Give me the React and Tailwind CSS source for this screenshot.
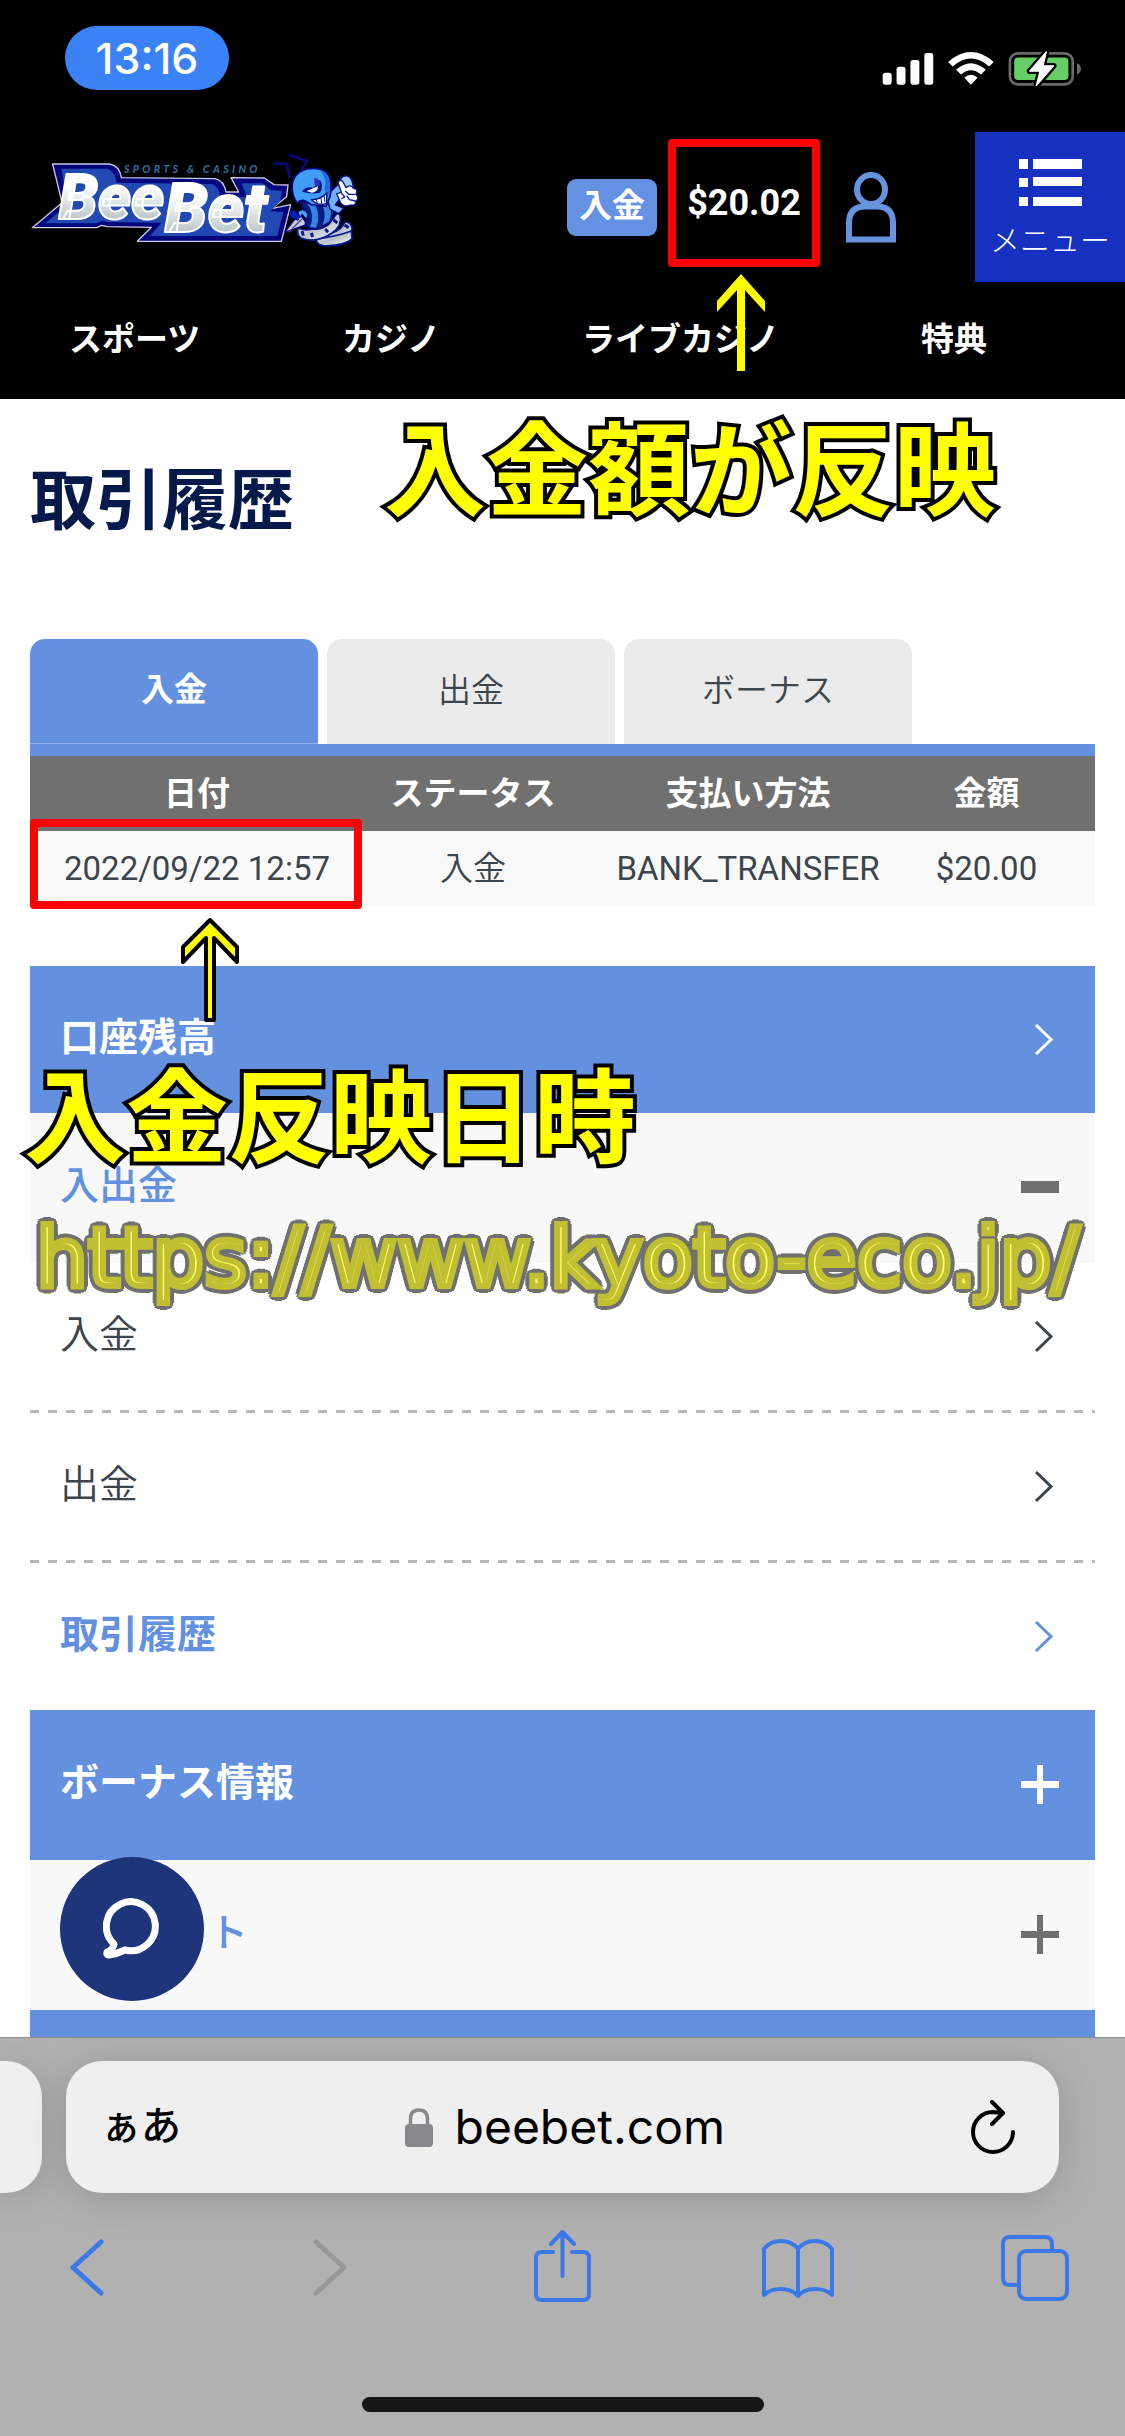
const jp = "font-['Roboto','Noto_Sans_CJK_JP',sans-serif]";

function StatusIcons() {
  return (
    <svg viewBox="60 60 610 115" className="mt-[50px] h-[38px] w-[203px]" aria-label="電波・Wi-Fi・バッテリー">
      <g fill="#fff">
        <rect x="66" y="129" width="27" height="36" rx="8" />
        <rect x="108" y="111" width="27" height="54" rx="8" />
        <rect x="150" y="90" width="27" height="75" rx="8" />
        <rect x="192" y="69" width="27" height="96" rx="8" />
        <path d="M264 96 Q333 36 402 96 L388 110 Q333 62 278 110 Z" />
        <path d="M288 120 Q333 80 378 120 L363 134 Q333 108 303 134 Z" />
        <path d="M313 144 Q333 126 353 144 L333 165 Z" />
      </g>
      <rect x="451" y="70" width="190" height="94" rx="24" fill="none" stroke="#6b6b6b" strokeWidth="8" />
      <rect x="464" y="83" width="164" height="68" rx="12" fill="#65cf66" />
      <path d="M654 100 Q666 104 666 117 Q666 130 654 134 Z" fill="#6b6b6b" />
      <path d="M561 66 L511 124 H542 L531 168 L583 108 H551 Z" fill="#fff" stroke="#000" strokeWidth="18" strokeLinejoin="round" />
      <path d="M561 66 L511 124 H542 L531 168 L583 108 H551 Z" fill="#fff" stroke="#fff" strokeWidth="4" strokeLinejoin="round" />
    </svg>
  );
}

function Logo() {
  return (
    <svg viewBox="33 60 996 342" className="h-[114px] w-[332px]" role="img" aria-label="BeeBet Sports & Casino">
      <defs>
        <linearGradient id="steel" x1="0" y1="0" x2="0" y2="1">
          <stop offset="0.35" stopColor="#fff" />
          <stop offset="0.85" stopColor="#b4c0c2" />
        </linearGradient>
        <linearGradient id="coil" x1="0" y1="0" x2="1" y2="1">
          <stop offset="0" stopColor="#fff" />
          <stop offset="0.5" stopColor="#b9c2c6" />
          <stop offset="1" stopColor="#fff" />
        </linearGradient>
      </defs>
      <path
        d="M98 102 L268 102 Q298 106 304 143 L585 146 Q612 152 618 186 L656 186 L633 143 L733 144 L762 164 L804 165 L800 200 L755 236 L812 224 L784 334 L352 334 L394 292 L262 290 L245 286 L230 293 L37 293 L126 218 Z"
        fill="#05057c" stroke="#c9c8e4" strokeWidth="4" strokeLinejoin="round"
      />
      <path
        d="M124 116 L262 116 Q284 122 290 158 L576 162 Q596 170 602 202 L682 202 L664 160 L728 160 L752 180 L786 182 L780 214 L752 244 L790 246 L772 318 L390 318 L424 278 L262 276 L245 272 L230 280 L76 280 L142 224 Z"
        fill="#2049b3"
      />
      <g fontFamily="Roboto, sans-serif" fontWeight="900" fontStyle="italic" stroke="#fff" strokeWidth="6" strokeLinejoin="round" fill="url(#steel)">
        <text x="116" y="266" fontSize="188">Bee</text>
        <text x="434" y="306" fontSize="206">Bet</text>
      </g>
      <text x="312" y="130" fontFamily="Lato, sans-serif" fontWeight="700" fontStyle="italic" fontSize="32" fill="#2a74a4" letterSpacing="10">SPORTS &amp; CASINO</text>
      <g transform="translate(750 45)" strokeLinejoin="round">
        <path d="M12 55 L50 56 L60 98 M56 29 L112 48 L92 78" fill="none" stroke="#090a78" strokeWidth="8" />
        <path d="M44 262 L88 205 L112 238 Z" fill="#c8c7de" stroke="#05057c" strokeWidth="4" />
        <path d="M56 262 L96 222" stroke="#4d4c8b" strokeWidth="4" />
        <path d="M58 202 Q70 188 90 210 L84 226 L62 218 Z" fill="#0b1cb2" stroke="#05057c" strokeWidth="3" />
        <g fill="url(#coil)" stroke="#0a1a93" strokeWidth="5">
          <path d="M160 270 Q214 262 224 232 Q246 230 246 254 Q230 286 176 292 Z" />
          <path d="M138 280 Q190 278 244 258 L246 282 Q220 304 160 302 Q140 300 138 280 Z" />
          <path d="M84 250 Q130 268 190 220 Q204 196 210 212 Q218 240 186 264 Q140 296 94 280 Q80 272 84 250 Z" />
        </g>
        <path d="M96 258 L100 272 M124 264 L128 276 M166 252 L174 262 M190 224 L202 234 M224 240 L236 248" stroke="#0a1a93" strokeWidth="9" />
        <path d="M92 172 L184 172 Q204 206 176 238 Q142 264 106 244 Q112 212 92 172 Z" fill="#071d7c" stroke="#05057c" strokeWidth="5" />
        <path d="M112 176 Q136 206 120 246 L138 248 Q154 214 134 176 Z M154 178 Q172 204 158 240 L176 230 Q190 204 176 178 Z" fill="#3384e4" />
        <path d="M84 202 Q98 184 114 208 L110 222 L96 208 L90 218 Z" fill="#4aa0f2" stroke="#05057c" strokeWidth="3" />
        <path d="M170 152 L210 112 L226 138 L196 180 L222 190 L206 206 L180 192 Z" fill="#74adf0" stroke="#05057c" strokeWidth="4" />
        <path d="M214 98 Q236 84 246 108 L250 126 L232 142 L206 122 Z" fill="#9bcbf8" stroke="#0a1a93" strokeWidth="4" />
        <path d="M204 112 Q212 100 220 112 L228 128 Q242 116 250 130 Q266 132 258 148 Q270 160 256 170 Q260 182 240 180 Q216 190 208 164 L200 146 L214 142 Z" fill="#fff" stroke="#0a1a93" strokeWidth="4" />
        <path d="M226 138 L236 148 L256 148 M230 152 L238 164 L256 168 M214 144 L224 156 L214 162" fill="none" stroke="#0a1a93" strokeWidth="4" />
        <path d="M67 136 Q62 84 112 72 Q160 64 176 92 Q188 118 180 154 L168 184 L122 178 Q96 156 82 174 Q70 160 67 136 Z" fill="#429df5" stroke="#070b80" strokeWidth="5" />
        <path d="M152 76 Q180 88 180 128 L173 160 L164 132 Q172 104 152 76 Z" fill="#2366d4" />
        <path d="M96 140 Q106 122 130 128 L150 104 Q162 124 150 143 Q124 149 96 140 Z" fill="#08158c" />
        <path d="M110 138 L144 124 Q144 142 126 143 Z" fill="#fff" />
        <path d="M134 98 Q150 100 150 122 L137 124 Q130 112 134 98 Z" fill="#3030ba" />
        <path d="M124 164 Q152 164 170 144 L170 174 Q150 186 124 164 Z" fill="#fff" stroke="#08158c" strokeWidth="4" />
        <path d="M138 162 L142 176 M152 156 L156 178 M162 150 L165 172" stroke="#08158c" strokeWidth="3" />
      </g>
    </svg>
  );
}

function PersonIcon() {
  return (
    <svg viewBox="0 0 50 71" className="h-[71px] w-[50px]" fill="none" stroke="#6793de" strokeWidth="6">
      <ellipse cx="25" cy="17.500" rx="14" ry="14.500" />
      <path d="M3 67.500 V51 Q3 34.500 19 34.500 H31 Q47 34.500 47 51 V67.500 Z" />
    </svg>
  );
}

function MenuIcon() {
  return (
    <svg viewBox="0 0 63 48" className="h-[48px] w-[63px]" fill="#fff">
      <path d="M0 0h9v10H0zM14 0h49v10H14zM0 19h9v9H0zM14 18h49v9H14zM0 38h9v9H0zM14 38h49v9H14z" />
    </svg>
  );
}

const rowIcons = {
  chevron: <path d="M15 5 L30 19.500 L15 34" fill="none" stroke="currentColor" strokeWidth="3" />,
  minus: <path d="M0 12h38v12H0z" fill="currentColor" />,
  plus: <path d="M0 15h16V-1h6v16h16v7H22v16h-6V22H0z" fill="currentColor" />,
};

function Row({ label, icon, className, iconColor = "", indent = "pl-[30px]" }) {
  return (
    <a href="#" className={`flex items-center justify-between pr-9 text-[39px] leading-[60px] ${indent} ${className}`}>
      <span className="mb-1">{label}</span>
      <svg viewBox="0 0 38 39" className={`h-[39px] w-[38px] overflow-visible ${iconColor}`}>{rowIcons[icon]}</svg>
    </a>
  );
}

function DashedLine() {
  return <div className="h-[3px] bg-[repeating-linear-gradient(90deg,#b8b8b8_0_9px,transparent_9px_18px)]" />;
}

function Note({ children, className }) {
  return (
    <p className={`pointer-events-none absolute z-10 whitespace-nowrap text-[102px] leading-[104px] font-bold text-[#ffff00] [-webkit-text-stroke:8px_#000] [paint-order:stroke_fill] [stroke-linejoin:round] ${className}`}>
      {children}
    </p>
  );
}

function ToolButton({ label, children, className = "text-[#3b78e7]" }) {
  return (
    <button aria-label={label} className={className}>
      <svg viewBox="0 0 72 72" className="size-[72px]" fill="none" stroke="currentColor" strokeWidth="4" strokeLinecap="round" strokeLinejoin="round">
        {children}
      </svg>
    </button>
  );
}

export default function App() {
  return (
    <div className={`flex min-h-screen flex-col overflow-hidden bg-white ${jp}`}>
      <header className="bg-black text-white">
        <div className="flex h-[132px] items-start justify-between pr-[42px] pl-[65px]">
          <time className="mt-[26px] flex h-16 w-[164px] items-center justify-center rounded-full bg-[#3b82f7] font-['Inter',sans-serif] text-[43px] font-medium">13:16</time>
          <StatusIcons />
        </div>
        <div className="flex h-[150px] items-center pl-[31px]">
          <a href="#"><Logo /></a>
          <button className="ml-auto h-[57px] w-[90px] rounded-[9px] bg-[#6491e1] pb-1 text-[33px] leading-none font-bold">入金</button>
          <div className="relative mb-2 ml-[11px] flex h-32 w-[152px] items-center justify-center rounded-sm border-8 border-[#ff0000] text-[36px] font-bold">
            $20.02
            <svg viewBox="0 0 50 97" className="pointer-events-none absolute top-[127px] left-[40px] z-10 h-[97px] w-[50px]" fill="#ffff00">
              <path d="M25 0 L49 27 V38 L29 16 V97 H21 V16 L1 38 V27 Z" />
            </svg>
          </div>
          <a href="#" aria-label="アカウント" className="ml-[26px]"><PersonIcon /></a>
          <button className="ml-[79px] flex h-full w-[150px] flex-col items-center bg-[#1630c0] pt-[27px] text-[30px] font-light">
            <MenuIcon />
            <span className="mt-3 leading-[44px]">メニュー</span>
          </button>
        </div>
        <nav className="flex h-[117px] items-center justify-between pr-[138px] pb-0.5 pl-[69px] text-[33px] font-bold">
          <a href="#">スポーツ</a>
          <a href="#">カジノ</a>
          <a href="#">ライブカジノ</a>
          <a href="#">特典</a>
        </nav>
      </header>

      <main className="relative px-[30px]">
        <h1 className="pt-[70px] pb-[104px] text-[66px] leading-[66px] font-bold text-[#051a4a]">取引履歴</h1>
        <Note className="top-[22px] left-[384px]">入金額が反映</Note>

        <div role="tablist" className="flex h-[105px] gap-[9px] text-[33px] text-[#3c444c]">
          <button role="tab" aria-selected="true" className="w-[288px] rounded-t-[15px] border-b border-[#8fb2ee] bg-[#6391e0] pb-0.5 font-bold text-white">入金</button>
          <button role="tab" aria-selected="false" className="w-[288px] rounded-t-[15px] bg-[#ebebeb] pb-0.5 font-[350]">出金</button>
          <button role="tab" aria-selected="false" className="w-[288px] rounded-t-[15px] bg-[#ebebeb] pb-0.5 font-[350]">ボーナス</button>
        </div>

        <div className="h-3 bg-[#6391e0]" />
        <table className="w-full table-fixed border-separate border-spacing-0 text-center text-[33px] text-[#3c444c]">
          <colgroup>
            <col className="w-[334px]" />
            <col className="w-[218px]" />
            <col className="w-[332px]" />
            <col />
          </colgroup>
          <thead className="bg-[#707070] text-white">
            <tr className="h-[75px] leading-[48px]">
              <th>日付</th>
              <th>ステータス</th>
              <th>支払い方法</th>
              <th className="pr-9">金額</th>
            </tr>
          </thead>
          <tbody className="bg-[#f9f9f9]">
            <tr className="h-[75px] leading-[48px] whitespace-nowrap">
              <td className="relative">
                2022/09/22 12:57
                <span className="pointer-events-none absolute -top-3 right-0.5 -bottom-[3px] left-0 rounded-sm border-8 border-[#ff0000]" />
                <svg viewBox="0 0 60 106" className="pointer-events-none absolute top-[86px] left-[150px] z-10 h-[106px] w-[60px]" fill="#ffff00" stroke="#000" strokeWidth="4" strokeLinejoin="round">
                  <path d="M30 3 L57 30 V45 L34 21 V103 H26 V21 L3 45 V30 Z" />
                </svg>
              </td>
              <td className="font-[350]">入金</td>
              <td>BANK_TRANSFER</td>
              <td className="pr-9">$20.00</td>
            </tr>
          </tbody>
        </table>

        <section className="relative mt-[60px] text-[#3c444c]">
          <Row label="口座残高" icon="chevron" className="h-[147px] bg-[#6391e0] font-bold text-white" />
          <Note className="top-[102px] left-[-6px]">入金反映日時</Note>
          <Row label="入出金" icon="minus" className="h-[150px] bg-[#f8f8f9] font-medium text-[#6391e0]" iconColor="text-[#707070]" />
          <p className="pointer-events-none absolute top-[245px] left-[6px] z-10 text-[82px] leading-[94px] whitespace-nowrap text-[#ffff66] font-['DejaVu_Sans',sans-serif] [-webkit-text-stroke:6px_#c1c033] [text-shadow:7px_0_#70706e,-7px_0_#70706e,0_7px_#70706e,0_-7px_#70706e,5px_5px_#70706e,-5px_5px_#70706e,5px_-5px_#70706e,-5px_-5px_#70706e,6px_3px_#70706e,-6px_3px_#70706e,6px_-3px_#70706e,-6px_-3px_#70706e,3px_6px_#70706e,-3px_6px_#70706e,3px_-6px_#70706e,-3px_-6px_#70706e]">
            https://www.kyoto-eco.jp/
          </p>
          <Row label="入金" icon="chevron" className="h-[147px] font-[350]" />
          <DashedLine />
          <Row label="出金" icon="chevron" className="h-[147px] font-[350]" />
          <DashedLine />
          <Row label="取引履歴" icon="chevron" className="h-[147px] font-bold text-[#6391e0]" />
          <Row label="ボーナス情報" icon="plus" className="h-[150px] bg-[#6391e0] font-bold text-white" />
          <div className="relative">
            <Row label="ト" icon="plus" indent="pl-[179px]" className="h-[150px] bg-[#f8f8f9] font-medium text-[#6391e0]" iconColor="text-[#707070]" />
            <button aria-label="チャット" className="absolute -top-[3px] left-[30px] flex size-36 items-center justify-center rounded-full bg-[#1e347b]">
              <svg viewBox="0 0 58 62" className="h-[62px] w-[58px]" fill="none" stroke="#fff" strokeWidth="7" strokeLinejoin="round">
                <path d="M11 46 A24.500 24.500 0 1 1 22 52 Q14 56 6 57 Q3 57 4 54 Q10 52 11 46 Z" />
              </svg>
            </button>
          </div>
          <div className="h-[27px] bg-[#6391e0]" />
        </section>
      </main>

      <footer className="flex flex-1 flex-col border-t border-[#8e8e8e] bg-[#b1b1b1] pt-[23px]">
        <div className="flex h-[132px] gap-6 text-black">
          <div className="w-[42px] rounded-r-[36px] bg-[#efefef] shadow-[0_6px_40px_rgba(0,0,0,0.16)]" />
          <div className="mr-[66px] grid flex-1 grid-cols-[1fr_auto_1fr] items-center rounded-[36px] bg-[#efefef] pr-[31px] pl-[35px] shadow-[0_6px_40px_rgba(0,0,0,0.16)]">
            <button aria-label="ページ設定" className="justify-self-start text-[40px] leading-[60px] font-medium">ぁあ</button>
            <div className="flex items-center gap-[22px]">
              <svg viewBox="0 0 28 39" className="h-[39px] w-[28px]">
                <path d="M5.500 18 V11 Q5.500 2 14 2 Q22.500 2 22.500 11 V18" fill="none" stroke="#88888c" strokeWidth="3.500" />
                <rect y="16" width="28" height="23" rx="4" fill="#88888c" />
              </svg>
              <input aria-label="アドレス" readOnly value="beebet.com" className="w-[270px] bg-transparent font-['Inter',sans-serif] text-[48px] leading-[60px] outline-none" />
            </div>
            <button aria-label="再読み込み" className="justify-self-end pr-3">
              <svg viewBox="0 0 46 55" className="h-[55px] w-[46px]" fill="none" stroke="#000" strokeWidth="4" strokeLinecap="round" strokeLinejoin="round">
                <path d="M43 32 A20 20 0 1 1 23 12 L32 13 M22 2 L33 13 L22 24" />
              </svg>
            </button>
          </div>
        </div>
        <div className="mt-[37px] flex justify-between pr-[54px] pl-[51px]">
          <ToolButton label="戻る"><path d="M50 12 L22 37.500 L50 63" strokeWidth="5" /></ToolButton>
          <ToolButton label="進む" className="text-[#989898]"><path d="M28 12 L56 37.500 L28 63" strokeWidth="5" /></ToolButton>
          <ToolButton label="共有">
            <path d="M28 22 H17 Q11 22 11 28 V64 Q11 70 17 70 H58 Q64 70 64 64 V28 Q64 22 58 22 H47 M37.500 46 V3 M26 14 L37.500 2 L49 14" />
          </ToolButton>
          <ToolButton label="ブックマーク">
            <path d="M36 19 Q30 11 19 11 Q8 11 2 19 V65 Q8 59 19 59 Q30 59 36 66 Q42 59 53 59 Q64 59 70 65 V19 Q64 11 53 11 Q42 11 36 19 Z M36 19 V66" />
          </ToolButton>
          <ToolButton label="タブ">
            <rect x="20" y="21" width="48" height="48" rx="7" />
            <path d="M20 55 H11 Q4 55 4 48 V14 Q4 7 11 7 H46 Q53 7 53 14 V21" />
          </ToolButton>
        </div>
        <div className="mx-auto mt-[95px] mb-6 h-[15px] w-[402px] rounded-full bg-[#161616]" />
      </footer>
    </div>
  );
}
